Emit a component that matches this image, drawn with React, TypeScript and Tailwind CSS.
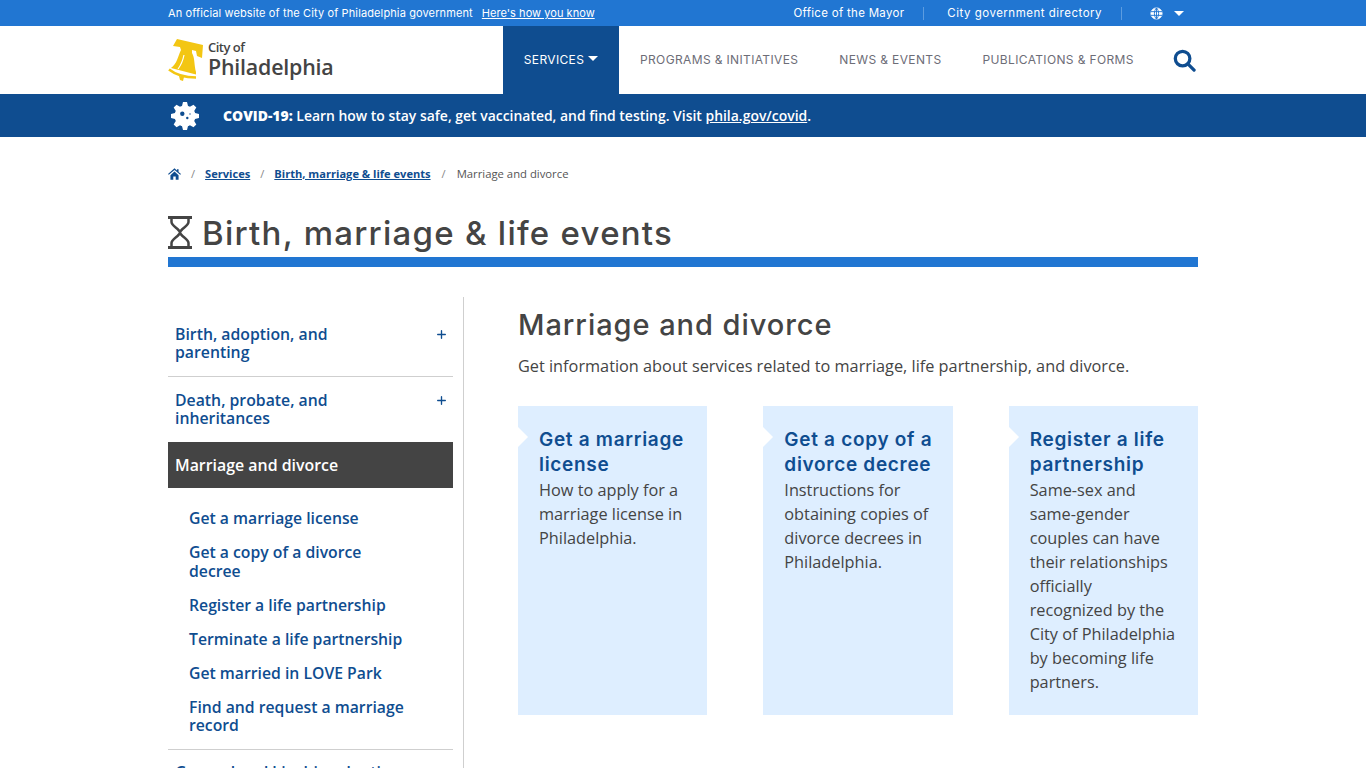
import React from 'react';
import { Plus } from 'lucide-react';

const HEAD = "font-['Inter',sans-serif]";

const Bell = () => (
  <svg viewBox="0 0 36 42" className="w-[36px] h-[42px]">
    <path fill="#f3c613" d="M9 0L35 6L34 19L29 17L28 12L24 11L24 14C27 19 26 26 28 33L28 35.500L3 29C9 25 10 17 13 11L12 8L5 7Z" />
    <path stroke="#fff" strokeWidth="1.200" fill="none" d="M16 16C15 21 13 26 10 30" />
    <path stroke="#f3c613" strokeWidth="2.600" fill="none" d="M1 30.500C8 36 18 38.500 28 38.500" />
    <path fill="#f3c613" d="M11 37l5 1-1 4-3-1z" />
  </svg>
);

const TEETH = [0, 45, 90, 135, 180, 225, 270, 315];

const Gear = () => (
  <svg viewBox="0 0 30 30" className="w-[30px] h-[30px]" fill="#fff">
    <circle cx="15" cy="15" r="10.500" />
    {TEETH.map((a) => (
      <path key={a} d="M11.500 7L13 1h4l1.500 6z" transform={`rotate(${a} 15 15)`} />
    ))}
    <circle cx="12.300" cy="12.700" r="2.200" fill="#0f4d90" />
    <circle cx="17.300" cy="17" r="1.200" fill="#0f4d90" />
    <circle cx="20" cy="13" r="0.700" fill="#0f4d90" />
  </svg>
);

const Globe = () => (
  <svg viewBox="0 0 14 14" className="w-[13px] h-[13px]" fill="none" stroke="#fff" strokeWidth="1">
    <circle cx="7" cy="7" r="6" fill="#fff" />
    <path stroke="#2176d2" d="M1 5h12M1 9h12M7 1v12M7 1C4 4 4 10 7 13M7 1c3 3 3 9 0 12" />
  </svg>
);

const Hourglass = () => (
  <svg viewBox="0 0 24 33" className="w-[24px] h-[33px]" fill="none" stroke="#444" strokeWidth="3">
    <path d="M0 1.500h24M0 31.500h24" />
    <path strokeWidth="2.500" d="M3.500 2v4c0 4 8 7 8.500 10.500C11.500 20 3.500 23 3.500 27v4M20.500 2v4c0 4-8 7-8.500 10.500C12.500 20 20.500 23 20.500 27v4" />
  </svg>
);

const Search = () => (
  <svg viewBox="0 0 24 24" className="w-[23px] h-[23px]" fill="none" stroke="#0f4d90" strokeWidth="3.400">
    <circle cx="10" cy="10" r="7.600" />
    <path strokeLinecap="round" d="M15.500 15.500l6.500 6.500" />
  </svg>
);

const Home = () => (
  <svg viewBox="0 0 16 14" className="w-[13px] h-[12px]" fill="#0f4d90">
    <path d="M8 0L0 7l1 1 7-6 7 6 1-1-3-2.600V1h-2v1.700z" />
    <path d="M3 8.500L8 4l5 4.500V14H9.500v-4h-3v4H3z" />
  </svg>
);

const NAV = ['PROGRAMS & INITIATIVES', 'NEWS & EVENTS', 'PUBLICATIONS & FORMS'];

const SUB = [
  'Get a marriage license',
  'Get a copy of a divorce decree',
  'Register a life partnership',
  'Terminate a life partnership',
  'Get married in LOVE Park',
  'Find and request a marriage record',
];

const CARDS = [
  {
    title: 'Get a marriage license',
    desc: 'How to apply for a marriage license in Philadelphia.',
  },
  {
    title: 'Get a copy of a divorce decree',
    desc: 'Instructions for obtaining copies of divorce decrees in Philadelphia.',
  },
  {
    title: 'Register a life partnership',
    desc: 'Same-sex and same-gender couples can have their relationships officially recognized by the City of Philadelphia by becoming life partners.',
  },
];

const SideItem = ({ label }: { label: string }) => (
  <div className="flex items-start justify-between border-b border-[#cfcfcf] pl-[7px] pr-[5px] pt-[14px] pb-[15px]">
    <span className="w-[200px] text-[15.800px] leading-[18px] font-semibold text-[#0f4d90]">{label}</span>
    <Plus className="w-[13px] h-[13px] mt-[3px] text-[#0f4d90]" strokeWidth={2.500} />
  </div>
);

export default function App() {
  return (
    <div className="h-screen overflow-hidden bg-white font-['Open_Sans',sans-serif] text-[#444]">
      <div className={`h-[26px] bg-[#2176d2] text-white ${HEAD}`}>
        <div className="w-[1030px] mx-auto h-full flex items-center text-[11px]">
          <span className="tracking-[0.12px]">An official website of the City of Philadelphia government</span>
          <span className="ml-[9px] underline tracking-[0.04px]">Here's how you know</span>
          <span className="ml-auto mt-[1px] text-[11.500px] tracking-[0.3px]">Office of the Mayor</span>
          <span className="ml-[19px] mr-[23px] h-[13px] w-px bg-[#5c9ce0]" />
          <span className="mt-[1px] text-[11.500px] tracking-[0.5px]">City government directory</span>
          <span className="ml-[19px] h-[13px] w-px bg-[#5c9ce0]" />
          <span className="ml-[28px]"><Globe /></span>
          <span className="ml-[11px] mr-[14px] w-0 h-0 border-x-[5px] border-x-transparent border-t-[5px] border-t-white" />
        </div>
      </div>

      <div className="h-[68px] bg-white">
        <div className="w-[1030px] mx-auto h-full flex items-center">
          <div className="flex items-center w-[335px]">
            <Bell />
            <div className="ml-[4px] mb-[2px] text-[#444] font-['Open_Sans',sans-serif]">
              <div className="text-[13px] leading-[14px] font-semibold tracking-[-0.5px]">City of</div>
              <div className="text-[21.400px] leading-[25px] font-semibold tracking-[-0.2px]">Philadelphia</div>
            </div>
          </div>
          <div className={`h-full w-[116px] bg-[#0f4d90] flex items-center justify-center text-white text-[12px] tracking-[0.36px] ${HEAD}`}>
            <span>SERVICES</span>
            <span className="ml-[4px] mb-[4px] w-0 h-0 border-x-[5px] border-x-transparent border-t-[5px] border-t-white" />
          </div>
          <div className={`flex items-center text-[#6d6d77] text-[12px] tracking-[0.36px] ${HEAD}`}>
            {NAV.map((n, i) => (
              <span key={n} className={i === 0 ? 'ml-[21px]' : 'ml-[41px]'}>{n}</span>
            ))}
          </div>
          <div className="ml-auto mr-[2px]"><Search /></div>
        </div>
      </div>

      <div className="h-[43px] bg-[#0f4d90] text-white">
        <div className="w-[1030px] mx-auto h-full flex items-center text-[13.950px]">
          <div className="ml-[2px]"><Gear /></div>
          <p className="ml-[23px] mt-[1px] font-semibold">
            <span className="font-extrabold">COVID-19:</span> Learn how to stay safe, get vaccinated, and find testing. Visit <span className="underline">phila.gov/covid</span>.
          </p>
        </div>
      </div>

      <div className="w-[1030px] mx-auto">
        <div className="flex items-center h-[16px] mt-[29px] text-[11.100px]">
          <Home />
          <span className="mx-[10px] text-[#888]">/</span>
          <span className="font-bold underline text-[#0f4d90]">Services</span>
          <span className="mx-[10px] text-[#888]">/</span>
          <span className="font-bold underline text-[#0f4d90]">Birth, marriage &amp; life events</span>
          <span className="mx-[11px] text-[#888]">/</span>
          <span className="text-[11.300px] text-[#555]">Marriage and divorce</span>
        </div>

        <div className="flex items-center h-[34px] mt-[33px]">
          <Hourglass />
          <h1 className={`ml-[10px] mt-[3px] text-[33px] font-medium tracking-[1.250px] text-[#444] ${HEAD}`}>Birth, marriage &amp; life events</h1>
        </div>
        <div className="h-[10px] mt-[8px] bg-[#2176d2]" />

        <div className="flex mt-[30px]">
          <aside className="w-[296px] shrink-0 border-r border-[#cfcfcf] pr-[10px] pt-[14px]">
            <SideItem label="Birth, adoption, and parenting" />
            <SideItem label="Death, probate, and inheritances" />
            <div className="h-[46px] -mt-[1px] pt-[1px] bg-[#444] flex items-center pl-[7px] text-white text-[15.900px] font-semibold">
              Marriage and divorce
            </div>
            <ul className="pl-[21px] pt-[21.400px] pb-[14px] border-b border-[#cfcfcf] flex flex-col gap-[15.600px]">
              {SUB.map((s) => (
                <li key={s} className="w-[225px] text-[15.750px] leading-[18.400px] font-semibold text-[#0f4d90]">{s}</li>
              ))}
            </ul>
            <div className="pl-[7px] pt-[13px] text-[15.800px] leading-[18px] font-semibold text-[#0f4d90]">General and kinship adoption</div>
          </aside>

          <main className="flex-1 pl-[54px] pt-[10px]">
            <h2 className={`text-[29px] leading-[36px] font-medium tracking-[0.950px] text-[#444] ${HEAD}`}>Marriage and divorce</h2>
            <p className="mt-[11px] text-[16.300px] leading-[24px] text-[#444]">Get information about services related to marriage, life partnership, and divorce.</p>
            <div className="grid grid-cols-3 gap-[56px] mt-[28px]">
              {CARDS.map((c) => (
                <div key={c.title} className="relative h-[309px] bg-[#deeeff] pl-[21px] pr-[20px] pt-[21px]">
                  <span className="absolute left-0 top-[21px] w-0 h-0 border-y-[10px] border-y-transparent border-l-[10px] border-l-white" />
                  <h3 className={`-mr-[6px] text-[19px] leading-[25px] font-semibold tracking-[0.700px] text-[#0f4d90] ${HEAD}`}>{c.title}</h3>
                  <p className="mt-[1px] pr-[2px] text-[16.300px] leading-[24px] text-[#444]">{c.desc}</p>
                </div>
              ))}
            </div>
          </main>
        </div>
      </div>
    </div>
  );
}
